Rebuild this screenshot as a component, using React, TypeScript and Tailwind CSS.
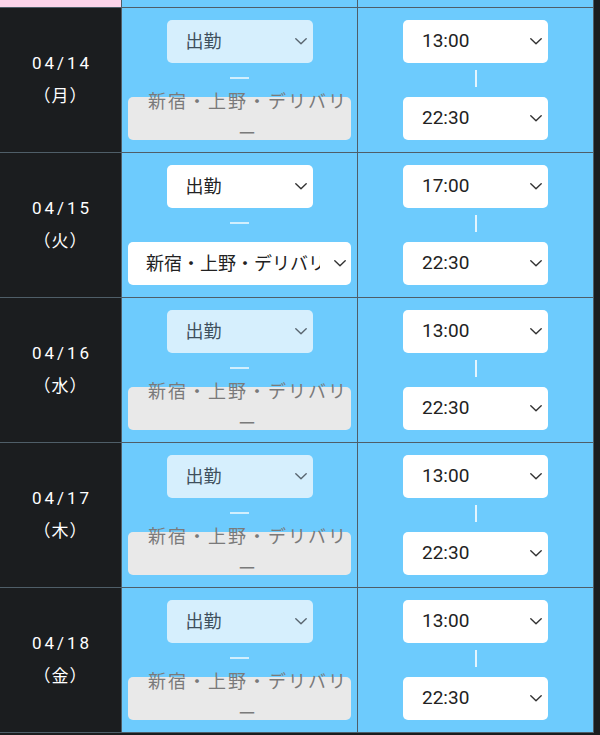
import React from "react";

type Row = {
  date: string;
  dow: string;
  statusWhite: boolean;
  areaEnabled: boolean;
  start: string;
  end: string;
};

const rows: Row[] = [
  { date: "04/14", dow: "（月）", statusWhite: false, areaEnabled: false, start: "13:00", end: "22:30" },
  { date: "04/15", dow: "（火）", statusWhite: true, areaEnabled: true, start: "17:00", end: "22:30" },
  { date: "04/16", dow: "（水）", statusWhite: false, areaEnabled: false, start: "13:00", end: "22:30" },
  { date: "04/17", dow: "（木）", statusWhite: false, areaEnabled: false, start: "13:00", end: "22:30" },
  { date: "04/18", dow: "（金）", statusWhite: false, areaEnabled: false, start: "13:00", end: "22:30" },
];

const font = { fontFamily: '"Roboto", "Noto Sans CJK JP", sans-serif' };

function Chevron({ color = "#333" }: { color?: string }) {
  return (
    <svg width="12" height="7" viewBox="0 0 12 7" fill="none" className="shrink-0">
      <polyline points="0.8,0.8 6,5.8 11.2,0.8" stroke={color} strokeWidth="1.4" strokeLinejoin="round" strokeLinecap="round" />
    </svg>
  );
}

function StatusSelect({ white }: { white: boolean }) {
  return (
    <div
      className={`w-[146px] h-[43px] rounded-[5px] flex items-center justify-between pl-[19px] pr-[6px] text-[18px] ${
        white ? "bg-white text-[#222222]" : "bg-[#d6effd] text-[#3e4f5c]"
      }`}
    >
      <span>出勤</span>
      <Chevron color={white ? "#333" : "#5a6670"} />
    </div>
  );
}

function AreaSelect({ enabled }: { enabled: boolean }) {
  if (enabled) {
    return (
      <div className="w-[223px] h-[43px] rounded-[5px] bg-white flex items-center pl-[18px] pr-[5px] text-[18px] text-[#222222]">
        <span className="w-[174px] overflow-hidden whitespace-nowrap">新宿・上野・デリバリー</span>
        <span className="ml-auto">
          <Chevron />
        </span>
      </div>
    );
  }
  return (
    <div className="w-[223px] h-[43px] rounded-[5px] bg-[#e9e9e9] relative">
      <div className="absolute left-[14px] top-[-11px] w-[212px] text-center text-[18px] leading-[32px] tracking-[2px] text-[#7a7a7a]">
        新宿・上野・デリバリー
      </div>
    </div>
  );
}

function TimeSelect({ value }: { value: string }) {
  return (
    <div className="w-[145px] h-[43px] rounded-[5px] bg-white flex items-center justify-between pl-[19px] pr-[6px] text-[19px] text-[#222222]">
      <span>{value}</span>
      <Chevron />
    </div>
  );
}

export default function App() {
  return (
    <div className="w-[600px] h-[735px] bg-[#1b1d1f] overflow-hidden" style={font}>
      <div className="w-[594px]">
        <div className="flex h-[8px] border-b border-[#4f5e68]">
          <div className="w-[122px] bg-[#fcd4ea] border-r border-[#4f5e68]" />
          <div className="w-[236px] bg-[#6dcbfd] border-r border-[#4f5e68]" />
          <div className="w-[236px] bg-[#6dcbfd] border-r border-[#4f5e68]" />
        </div>
        {rows.map((r) => (
          <div key={r.date} className="flex h-[145px] border-b border-[#4f5e68]">
            <div className="w-[122px] bg-[#1b1d1f] border-r border-[#4f5e68] flex flex-col items-center justify-center text-white text-[17px]">
              <div className="leading-[33px] tracking-[3px] pl-[3px]">{r.date}</div>
              <div className="leading-[33px] tracking-[1px]">{r.dow}</div>
            </div>
            <div className="w-[236px] bg-[#6dcbfd] border-r border-[#4f5e68] flex flex-col items-center pt-[12px]">
              <StatusSelect white={r.statusWhite} />
              <div className="h-[34px] flex items-start justify-center pt-[14px]">
                <div className="w-[19px] h-[2px] bg-[#d2effd]" />
              </div>
              <AreaSelect enabled={r.areaEnabled} />
            </div>
            <div className="w-[236px] bg-[#6dcbfd] border-r border-[#4f5e68] flex flex-col items-center pt-[12px]">
              <TimeSelect value={r.start} />
              <div className="h-[34px] flex items-start justify-center pt-[7px]">
                <div className="w-[2px] h-[17px] bg-[#e4f5fe]" />
              </div>
              <TimeSelect value={r.end} />
            </div>
          </div>
        ))}
      </div>
    </div>
  );
}
